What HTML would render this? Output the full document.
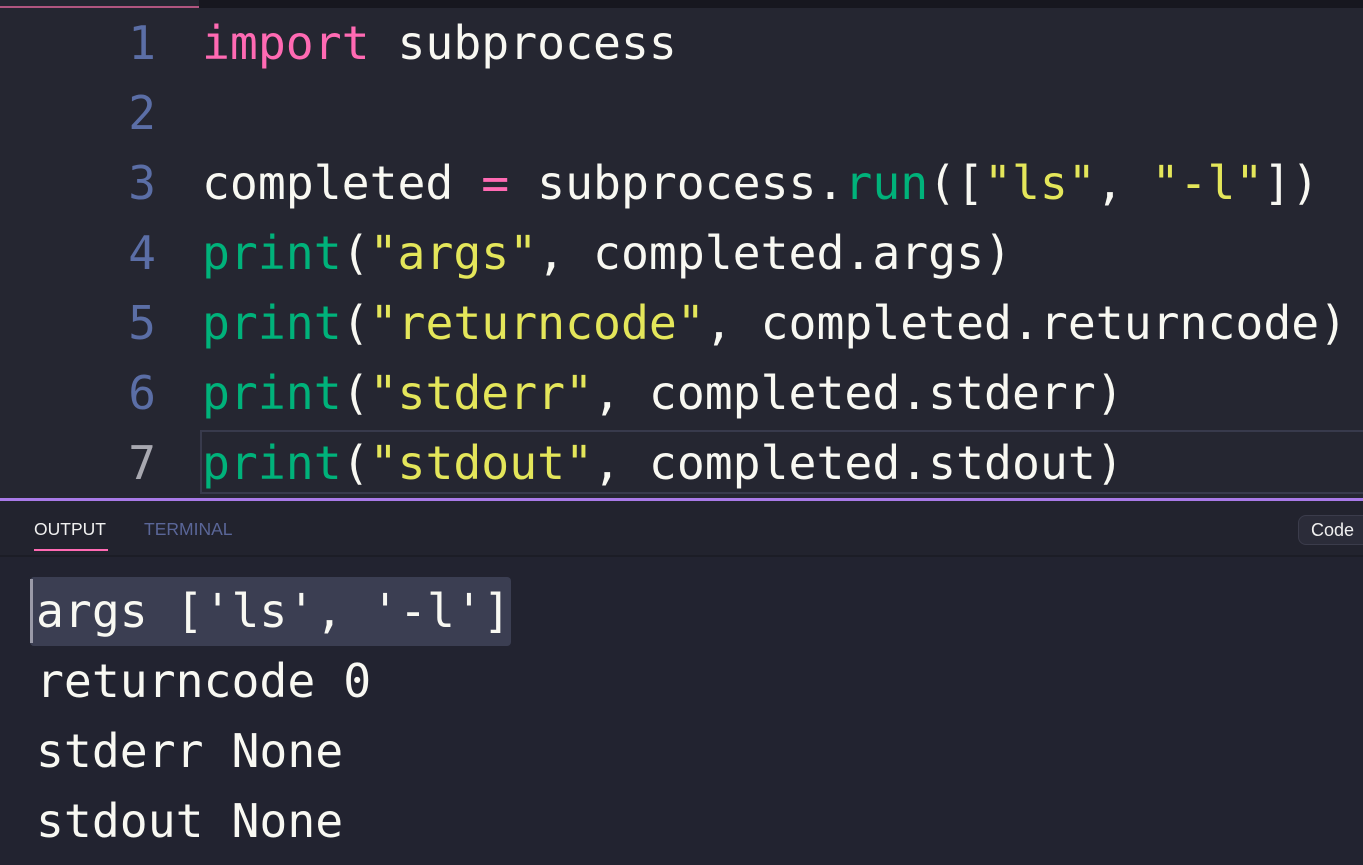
<!DOCTYPE html>
<html><head><meta charset="utf-8"><style>
html,body{margin:0;padding:0;width:1363px;height:865px;overflow:hidden;background:#252631;}
body{position:relative;font-family:"DejaVu Sans Mono","Liberation Mono",monospace;}
#top{position:absolute;left:0;top:0;width:1363px;height:8px;background:#17171f;}
#tab{position:absolute;left:0;top:0;width:199px;height:8px;background:#252631;border-bottom:2px solid #b0557f;box-sizing:border-box;}
.ln{position:absolute;left:0;width:156px;text-align:right;font-size:46px;line-height:70px;color:#5b6ea6;}
.cl{position:absolute;left:202px;font-size:46.4px;line-height:70px;color:#f8f8f2;white-space:pre;}
.k{color:#ff6ab3}.f{color:#00b27a}.s{color:#e4e65a}
#hl{position:absolute;left:200px;top:430px;width:1170px;height:64px;border:2px solid #383a4c;box-sizing:border-box;}
#purple{position:absolute;left:0;top:498px;width:1363px;height:3px;background:#a97ae8;}
#head{position:absolute;left:0;top:501px;width:1363px;height:56px;background:#22232e;border-bottom:2px solid #1c1d26;box-sizing:border-box;}
.t{position:absolute;top:18px;font-family:"Liberation Sans",sans-serif;font-size:17.5px;}
#out{position:absolute;left:0;top:557px;width:1363px;height:308px;background:#222330;overflow:hidden;}
.ol{position:absolute;left:36px;font-size:46.4px;line-height:70px;color:#f8f8f2;white-space:pre;}
#sel{position:absolute;left:30px;top:20px;width:481px;height:69px;background:#3b3e52;border-radius:4px;}
#cur{position:absolute;left:30px;top:22px;width:3px;height:64px;background:#9a9aa8;}
#code{position:absolute;left:1298px;top:14px;width:80px;height:30px;background:#2b2c39;border:1px solid #3b3c4b;border-radius:8px;box-sizing:border-box;color:#f0f0f0;font-family:"Liberation Sans",sans-serif;font-size:18px;line-height:28px;padding-left:12px;}
</style></head><body>
<div id="top"></div><div id="tab"></div>
<div id="hl"></div>
<div class="ln" style="top:8px">1</div>
<div class="ln" style="top:78px">2</div>
<div class="ln" style="top:148px">3</div>
<div class="ln" style="top:218px">4</div>
<div class="ln" style="top:288px">5</div>
<div class="ln" style="top:358px">6</div>
<div class="ln" style="top:428px;color:#a8a8b0">7</div>
<div class="cl" style="top:8px"><span class="k">import</span> subprocess</div>
<div class="cl" style="top:148px">completed <span class="k">=</span> subprocess.<span class="f">run</span>([<span class="s">"ls"</span>, <span class="s">"-l"</span>])</div>
<div class="cl" style="top:218px"><span class="f">print</span>(<span class="s">"args"</span>, completed.args)</div>
<div class="cl" style="top:288px"><span class="f">print</span>(<span class="s">"returncode"</span>, completed.returncode)</div>
<div class="cl" style="top:358px"><span class="f">print</span>(<span class="s">"stderr"</span>, completed.stderr)</div>
<div class="cl" style="top:428px"><span class="f">print</span>(<span class="s">"stdout"</span>, completed.stdout)</div>
<div id="purple"></div>
<div id="out">
<div id="sel"></div><div id="cur"></div>
<div class="ol" style="top:19px">args ['ls', '-l']</div>
<div class="ol" style="top:89px">returncode 0</div>
<div class="ol" style="top:159px">stderr None</div>
<div class="ol" style="top:229px">stdout None</div>
</div>
<div id="head">
<div class="t" style="left:34px;color:#f0f0f0">OUTPUT</div>
<div style="position:absolute;left:34px;top:48px;width:74px;height:2px;background:#ff6ab3"></div>
<div class="t" style="left:144px;color:#5a6698">TERMINAL</div>
<div id="code">Code</div>
</div>
</body></html>
